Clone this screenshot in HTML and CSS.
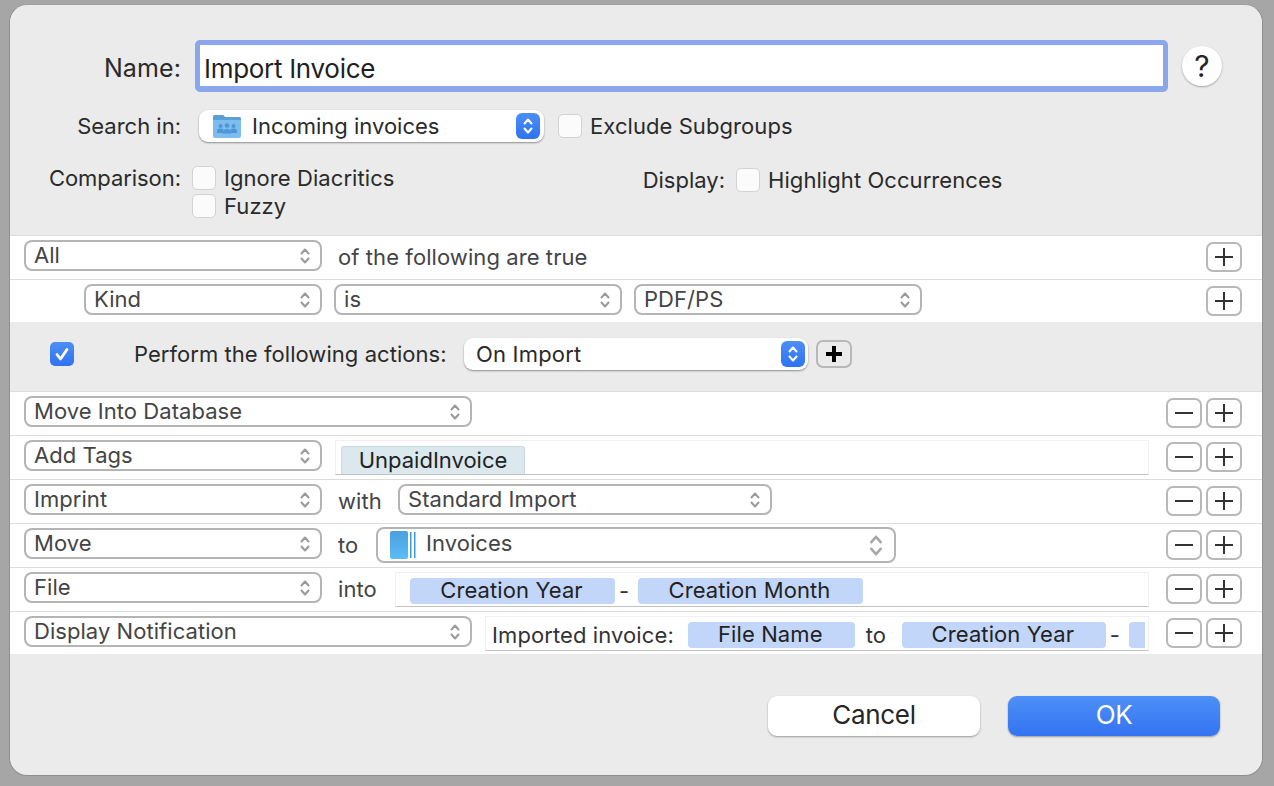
FILE: index.html
```html
<!DOCTYPE html>
<html>
<head>
  <title>Import Invoice</title>
  <link rel="stylesheet" href="styles.css">
</head>
<body>
  <svg class="defs" width="0" height="0">
    <symbol id="chev" viewBox="0 0 12 20">
      <path d="M2.5 7.5 6 3.500l3.500 4M2.500 12.500 6 16.500l3.500-4" fill="none" stroke="currentColor" stroke-width="2" stroke-linecap="round" stroke-linejoin="round"/>
    </symbol>
    <symbol id="plus" viewBox="0 0 20 20">
      <path d="M0 10h20M10 0v20" fill="none" stroke="currentColor"/>
    </symbol>
    <symbol id="minus" viewBox="0 0 20 20">
      <path d="M0 10h20" fill="none" stroke="currentColor"/>
    </symbol>
  </svg>

  <div class="dialog">
    <div class="head">
      <div class="name-row">
        <label class="lbl lbl-big">Name:</label>
        <div class="name-field">Import Invoice</div>
        <button class="help">?</button>
      </div>

      <div class="search-row">
        <label class="lbl">Search in:</label>
        <div class="mac-popup search-popup">
          <svg class="folder" width="30" height="24" viewBox="0 0 30 24">
            <path d="M1 3q0-2 2-2h8l2 2h14q2 0 2 2v17q0 2-2 2H3q-2 0-2-2z" fill="#7cbdee"/>
            <path d="M1 3q0-2 2-2h8l2 2h14q2 0 2 2v1H1z" fill="#5a9fd8"/>
            <g fill="#4e96d6">
              <circle cx="8.500" cy="12" r="2"/><circle cx="15" cy="11.500" r="2.300"/><circle cx="21.500" cy="12" r="2"/>
              <path d="M5 19v-2q0-2.500 3.500-2.500 2 0 3 1-1 1-1 3.500zM10.500 19.500q0-4.500 4.500-4.500t4.500 4.500zM25 19v-2q0-2.500-3.500-2.500-2 0-3 1 1 1 1 3.500z"/>
            </g>
          </svg>
          <span class="pop-text">Incoming invoices</span>
          <span class="blue-step"><svg width="12" height="20"><use href="#chev"/></svg></span>
        </div>
        <span class="check"></span>
        <span class="check-text">Exclude Subgroups</span>
      </div>

      <div class="compare-row">
        <label class="lbl">Comparison:</label>
        <div class="checks">
          <div class="check-line"><span class="check"></span><span class="check-text">Ignore Diacritics</span></div>
          <div class="check-line"><span class="check"></span><span class="check-text">Fuzzy</span></div>
        </div>
        <div class="display-group">
          <span class="display-lbl">Display:</span>
          <span class="check"></span>
          <span class="check-text">Highlight Occurrences</span>
        </div>
      </div>
    </div>

    <div class="rows">
      <div class="row">
        <div class="sel w298"><span>All</span><svg width="12" height="20"><use href="#chev"/></svg></div>
        <span class="word">of the following are true</span>
        <div class="row-btns"><button class="sq"><svg><use href="#plus"/></svg></button></div>
      </div>
      <div class="row">
        <div class="sel w238 indent"><span>Kind</span><svg width="12" height="20"><use href="#chev"/></svg></div>
        <div class="sel w288"><span>is</span><svg width="12" height="20"><use href="#chev"/></svg></div>
        <div class="sel w288"><span>PDF/PS</span><svg width="12" height="20"><use href="#chev"/></svg></div>
        <div class="row-btns"><button class="sq"><svg><use href="#plus"/></svg></button></div>
      </div>
    </div>

    <div class="actions-bar">
      <span class="check check-on">
        <svg width="24" height="24" viewBox="0 0 24 24"><path d="M7 12.500l3.500 4.500L17 7.500" fill="none" stroke="#fff" stroke-width="2.800" stroke-linecap="round" stroke-linejoin="round"/></svg>
      </span>
      <span class="perform">Perform the following actions:</span>
      <div class="mac-popup event-popup">
        <span class="pop-text">On Import</span>
        <span class="blue-step"><svg width="12" height="20"><use href="#chev"/></svg></span>
      </div>
      <button class="sq sq-bold"><svg><use href="#plus"/></svg></button>
    </div>

    <div class="rows">
      <div class="row">
        <div class="sel w448"><span>Move Into Database</span><svg width="12" height="20"><use href="#chev"/></svg></div>
        <div class="row-btns"><button class="sq"><svg><use href="#minus"/></svg></button><button class="sq"><svg><use href="#plus"/></svg></button></div>
      </div>
      <div class="row">
        <div class="sel w298"><span>Add Tags</span><svg width="12" height="20"><use href="#chev"/></svg></div>
        <div class="field tags-field"><span class="tag">UnpaidInvoice</span></div>
        <div class="row-btns"><button class="sq"><svg><use href="#minus"/></svg></button><button class="sq"><svg><use href="#plus"/></svg></button></div>
      </div>
      <div class="row">
        <div class="sel w298"><span>Imprint</span><svg width="12" height="20"><use href="#chev"/></svg></div>
        <span class="word word-with">with</span>
        <div class="sel w374"><span>Standard Import</span><svg width="12" height="20"><use href="#chev"/></svg></div>
        <div class="row-btns"><button class="sq"><svg><use href="#minus"/></svg></button><button class="sq"><svg><use href="#plus"/></svg></button></div>
      </div>
      <div class="row">
        <div class="sel w298"><span>Move</span><svg width="12" height="20"><use href="#chev"/></svg></div>
        <span class="word word-to">to</span>
        <div class="sel sel-group">
          <svg class="group-icon" width="28" height="28" viewBox="0 0 28 28">
            <defs>
              <linearGradient id="groupFill" x1="0" y1="0" x2="0" y2="1">
                <stop offset="0" stop-color="#4a9fe0"/>
                <stop offset="1" stop-color="#5cbcf5"/>
              </linearGradient>
            </defs>
            <rect x="0" y="0" width="18" height="28" rx="2" fill="url(#groupFill)"/>
            <rect x="20" y="1" width="1.500" height="26" fill="#3c9ad9"/>
            <rect x="24" y="1" width="1.500" height="26" fill="#3c9ad9"/>
          </svg>
          <span>Invoices</span>
          <svg class="chev-big" width="16" height="27" viewBox="0 0 12 20"><use href="#chev"/></svg>
        </div>
        <div class="row-btns"><button class="sq"><svg><use href="#minus"/></svg></button><button class="sq"><svg><use href="#plus"/></svg></button></div>
      </div>
      <div class="row">
        <div class="sel w298"><span>File</span><svg width="12" height="20"><use href="#chev"/></svg></div>
        <span class="word word-into">into</span>
        <div class="field file-field">
          <span class="token t205">Creation Year</span><span class="dash">-</span><span class="token t225">Creation Month</span>
        </div>
        <div class="row-btns"><button class="sq"><svg><use href="#minus"/></svg></button><button class="sq"><svg><use href="#plus"/></svg></button></div>
      </div>
      <div class="row">
        <div class="sel w448"><span>Display Notification</span><svg width="12" height="20"><use href="#chev"/></svg></div>
        <div class="field notify-field">
          <span class="plain">Imported invoice:</span>
          <span class="token t167">File Name</span>
          <span class="plain plain-to">to</span>
          <span class="token t204">Creation Year</span><span class="dash">-</span><span class="token t-cut"></span>
        </div>
        <div class="row-btns"><button class="sq"><svg><use href="#minus"/></svg></button><button class="sq"><svg><use href="#plus"/></svg></button></div>
      </div>
    </div>

    <div class="footer">
      <button class="btn">Cancel</button>
      <button class="btn btn-ok">OK</button>
    </div>
  </div>
</body>
</html>
```

FILE: styles.css
```css
* {
  box-sizing: border-box;
}

html, body {
  margin: 0;
  height: 100%;
}

body {
  background: #a6a6a6;
  padding: 4px 11px 10px 9px;
  font-family: Inter, "Liberation Sans", sans-serif;
  font-size: 22px;
  color: #2a2a2a;
  overflow: hidden;
}

.defs {
  position: absolute;
}

button {
  font-family: inherit;
  padding: 0;
  border: 0;
}

.dialog {
  height: 772px;
  background: #ebebeb;
  border: 1px solid #8f8f8f;
  border-top-color: #a0a0a0;
  border-radius: 18px;
  overflow: hidden;
}

.head {
  height: 230px;
  padding-top: 35px;
}

.lbl {
  width: 171px;
  flex: none;
  text-align: right;
}

.lbl-big {
  margin-top: 4px;
  font-size: 25px;
  letter-spacing: 0.1px;
}

.name-row, .search-row {
  display: flex;
  align-items: center;
}

.name-field {
  width: 973px;
  height: 52px;
  margin-left: 14px;
  padding: 0 4px;
  line-height: 47px;
  font-size: 26px;
  letter-spacing: -0.3px;
  color: #1f1f1f;
  background: #fff;
  border: 5px solid #8aa6ec;
  border-bottom-width: 6px;
  border-radius: 5px;
}

.help {
  width: 40px;
  height: 40px;
  margin-left: 14px;
  border-radius: 50%;
  background: #fff;
  box-shadow: 0 1px 2px rgba(0, 0, 0, 0.3);
  font-size: 30px;
  font-weight: 400;
  color: #262626;
}

.search-row {
  margin-top: 18px;
  height: 32px;
}

.mac-popup {
  display: flex;
  align-items: center;
  height: 32px;
  background: #fff;
  border-radius: 9px;
  box-shadow: 0 1px 2px rgba(0, 0, 0, 0.4);
}

.search-popup {
  width: 345px;
  margin-left: 18px;
  padding: 0 4px 0 13px;
}

.folder {
  flex: none;
  margin-right: 10px;
}

.blue-step {
  display: flex;
  align-items: center;
  justify-content: center;
  width: 24px;
  height: 26px;
  margin-left: auto;
  border-radius: 6px;
  color: #fff;
  background: linear-gradient(#4d8ff5, #2f72f0);
}

.check {
  display: inline-block;
  flex: none;
  width: 24px;
  height: 24px;
  background: #fbfbfb;
  border: 1px solid #d2d2d2;
  border-radius: 5px;
}

.search-row .check {
  margin-left: 14px;
}

.check-text {
  margin-left: 8px;
  letter-spacing: 0.07px;
}

.compare-row {
  display: flex;
  margin-top: 24px;
  align-items: flex-start;
}

.compare-row .lbl {
  line-height: 24px;
  letter-spacing: -0.05px;
}

.checks {
  display: flex;
  flex-direction: column;
  gap: 4px;
  width: 450px;
  margin-left: 11px;
}

.check-line, .display-group {
  display: flex;
  align-items: center;
  height: 24px;
}

.display-group {
  margin-top: 2px;
}

.display-lbl {
  width: 83px;
  margin-right: 11px;
  text-align: right;
}

.rows {
  background: #fff;
}

.row {
  display: flex;
  align-items: center;
  height: 44px;
  padding: 0 20px 4px 14px;
  background: #fff;
  border-top: 1px solid #dcdcdc;
}

.row:last-child {
  height: 43px;
  padding-bottom: 3px;
}

.sel {
  display: flex;
  flex: none;
  align-items: center;
  justify-content: space-between;
  height: 31px;
  padding: 0 9px 0 8px;
  color: #444;
  background: #fff;
  border: 2px solid #b4b4b4;
  border-radius: 8px;
  letter-spacing: 0.05px;
}

.sel span {
  margin-top: -2px;
}

.sel svg {
  color: #9a9a9a;
}

.w238 { width: 238px; }
.w288 { width: 288px; margin-left: 12px; }
.w298 { width: 298px; }
.w374 { width: 374px; }
.w448 { width: 448px; }

.indent {
  margin-left: 60px;
}

.word {
  margin: 3px 0 0 16px;
  color: #444;
  letter-spacing: 0.08px;
}

.word-with { width: 60px; flex: none; }
.word-to { width: 38px; flex: none; }
.word-into { width: 57px; flex: none; }

.sel-group {
  justify-content: flex-start;
  width: 520px;
  height: 36px;
  padding: 0 10px 0 12px;
  margin-top: 3px;
}

.sel-group span {
  margin-top: -4px;
}

.group-icon {
  flex: none;
  margin-right: 8px;
}

.sel-group .chev-big {
  margin-left: auto;
  color: #a8a8a8;
}

.row-btns {
  display: flex;
  gap: 4px;
  margin: 3px 0 0 auto;
}

.sq {
  display: flex;
  align-items: center;
  justify-content: center;
  width: 36px;
  height: 30px;
  background: #fff;
  border: 2px solid #b8b8b8;
  border-radius: 7px;
  color: #333;
  stroke-width: 2.2;
}

.sq svg {
  width: 18px;
  height: 18px;
}

.field {
  display: flex;
  align-items: center;
  flex: none;
  height: 35px;
  margin-top: 4px;
  padding-top: 3px;
  background: #fff;
  border: 1px solid #f0f0f0;
  border-bottom: 1px solid #c4c4c4;
  overflow: hidden;
  white-space: nowrap;
}

.tags-field {
  width: 814px;
  margin-left: 13px;
  align-items: flex-end;
  padding-left: 5px;
}

.tag {
  width: 184px;
  height: 28px;
  line-height: 26px;
  text-align: center;
  color: #222;
  background: #dbe9ef;
  border: 1px solid #c9d9e0;
  border-bottom: 0;
  border-radius: 3px 3px 0 0;
}

.file-field {
  width: 754px;
  padding-left: 14px;
}

.notify-field {
  width: 664px;
  margin-left: 13px;
  padding-left: 6px;
}

.token {
  flex: none;
  height: 26px;
  padding-right: 2px;
  line-height: 25px;
  text-align: center;
  color: #222;
  background: #c2d6fa;
  border-radius: 4px;
  letter-spacing: 0.1px;
}

.t205 { width: 205px; }
.t225 { width: 225px; }
.t167 { width: 167px; margin-left: 14px; }
.t204 { width: 204px; }
.t-cut { width: 16px; border-radius: 4px 0 0 4px; }

.dash {
  flex: none;
  width: 23px;
  padding-right: 5px;
  text-align: center;
  color: #333;
}

.plain {
  letter-spacing: 0.1px;
  color: #333;
}

.plain-to {
  width: 47px;
  flex: none;
  padding-right: 5px;
  text-align: center;
}

.actions-bar {
  display: flex;
  align-items: center;
  height: 69px;
  padding: 0 0 6px 40px;
}

.check-on {
  background: linear-gradient(#4d8ff5, #2f72f0);
  border: 0;
}

.check-on svg {
  display: block;
}

.perform {
  width: 330px;
  flex: none;
  margin-left: 60px;
  letter-spacing: 0.05px;
}

.event-popup {
  width: 344px;
  padding: 0 3px 0 12px;
  letter-spacing: 0.2px;
}

.sq-bold {
  height: 28px;
  margin-left: 8px;
  background: #ebebeb;
  color: #000;
  stroke-width: 5;
}

.sq-bold svg {
  width: 16px;
  height: 16px;
}

.footer {
  display: flex;
  justify-content: flex-end;
  gap: 28px;
  padding: 42px 42px 0 0;
}

.btn {
  width: 212px;
  height: 40px;
  padding-bottom: 3px;
  border-radius: 9px;
  background: #fff;
  box-shadow: 0 1px 2px rgba(0, 0, 0, 0.35);
  font-size: 26px;
  letter-spacing: -0.3px;
  color: #262626;
}

.btn-ok {
  color: #fff;
  background: linear-gradient(#4d90f6, #3373f2);
}
```
